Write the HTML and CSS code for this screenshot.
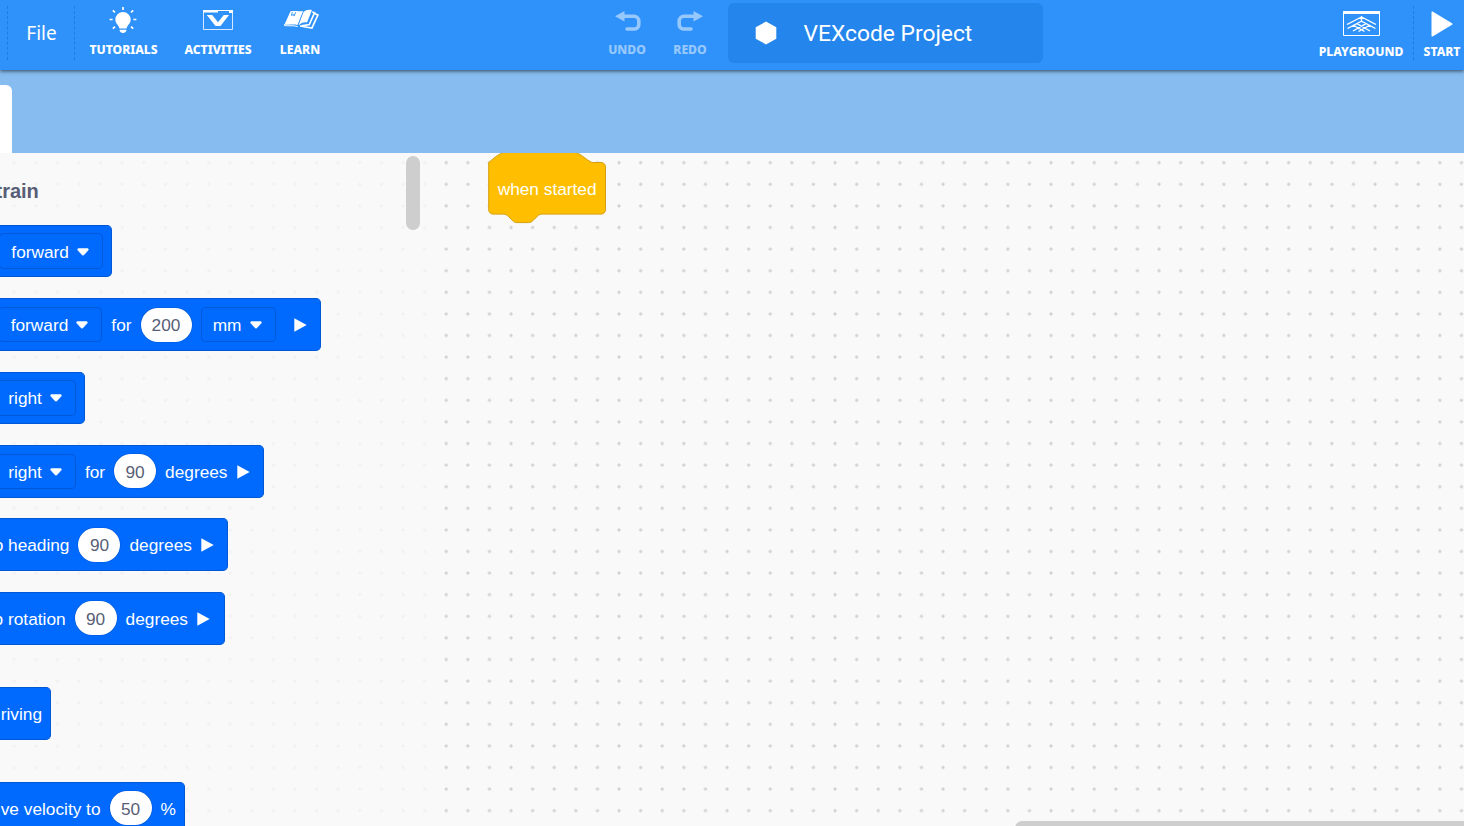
FILE: index.html
```
<!DOCTYPE html>
<html lang="en">
<head>
<meta charset="utf-8">
<title>VEXcode Project</title>
<link rel="stylesheet" href="styles.css">
</head>
<body>
<svg class="defs" width="0" height="0">
  <symbol id="caret" viewBox="0 0 12 8"><path d="M1.600 .5h8.800c1 0 1.400 1 .7 1.700L7 6.800c-.6.6-1.400.6-2 0L.9 2.200C.2 1.500.6.5 1.600.5z" fill="#fff" stroke="#fff" stroke-width=".5"/></symbol>
  <symbol id="play" viewBox="0 0 13 14"><path d="M.3 .3L12.700 7 .3 13.700z" fill="#fff"/></symbol>
</svg>
<header class="bar">
  <div class="file">File</div>
  <div class="tool tutorials">
    <svg width="28" height="27" viewBox="0 0 28 27" fill="#fff"><path d="M14 5a7.700 7.700 0 0 0-7.700 7.700c0 3 2.200 4.600 3.200 6.300.5.9.5 2.400 1.600 2.400h5.800c1.100 0 1.100-1.500 1.600-2.400 1-1.700 3.200-3.300 3.200-6.300A7.700 7.700 0 0 0 14 5z"/><path d="M10.500 22.800h7c0 2-1.500 3.200-3.500 3.200s-3.500-1.200-3.500-3.200z"/><path d="M14 0v3M.6 12.500h3M24.400 12.500h3M3.800 3.300l2.200 2M24.200 3.300l-2.200 2M3.800 21.600l2.200-2M24.200 21.600l-2.200-2" stroke="#fff" stroke-width="1.700"/></svg>
    <span>TUTORIALS</span>
  </div>
  <div class="tool activities">
    <svg width="30" height="20" viewBox="0 0 30 20" fill="none"><path d="M.5 1v18.500h29V1" stroke="#fff" stroke-opacity=".8"/><path d="M0 0h15v2.500H0zM15 0h11v1H15zM26 0h4v3h-4z" fill="#fff"/><path d="M3.800 5h5.400l5.800 7.200L20.800 5H26l-8.500 11h-5z" fill="#fff"/></svg>
    <span>ACTIVITIES</span>
  </div>
  <div class="tool learn">
    <svg width="36" height="22" viewBox="0 0 36 22" fill="none"><path d="M6.500 2.300c4-.6 8 .4 12.500-.3L13.500 16c-4-1-9 .2-13-.6z" fill="#fff"/><path d="M19.500 3C22 .8 25 .1 28 1.100L23 13.500c-3-.8-6 .5-8.500 3z" fill="#fff"/><path d="M8.200 3.200L7.500 6.500l2-1.200.6 1.800 1.600-3.900" stroke="#2f92fa" stroke-width=".9"/><path d="M28.300 3l2.200.8L25.300 15.500l-7.800 1.300M31 4.800l2.900 1.200-6 13L16 17" stroke="#fff" stroke-width="1.700"/><path d="M.6 15v1.600c4 .5 9-.4 13 .9" stroke="#fff"/></svg>
    <span>LEARN</span>
  </div>
  <div class="tool undo">
    <svg width="26" height="20" viewBox="0 0 26 20"><path d="M9 5.300h10a4.800 4.800 0 0 1 4.800 4.800v3.700a4.200 4.200 0 0 1-4.200 4.200H12" fill="none" stroke="#fff" stroke-width="3.600" stroke-linecap="round"/><path d="M0 5.200L9.500 0v10.400z" fill="#fff"/></svg>
    <span>UNDO</span>
  </div>
  <div class="tool redo">
    <svg width="26" height="20" viewBox="0 0 26 20"><path d="M17 5.300H7a4.800 4.800 0 0 0-4.800 4.800v3.700A4.200 4.200 0 0 0 6.400 18H14" fill="none" stroke="#fff" stroke-width="3.600" stroke-linecap="round"/><path d="M26 5.200L16.500 0v10.400z" fill="#fff"/></svg>
    <span>REDO</span>
  </div>
  <div class="project">
    <svg width="22" height="24" viewBox="0 0 22 24"><path d="M11 .5l10.300 5.800v11.400L11 23.500.7 17.700V6.300z" fill="#fff"/></svg>
    <span>VEXcode Project</span>
  </div>
  <div class="tool playground">
    <svg width="37" height="25" viewBox="0 0 37 25" fill="none" stroke="#fff"><path d="M.5 2v22.500h36V2"/><path d="M0 0h37v3H0z" fill="#fff" stroke="none"/><path d="M4 13.500L18.500 6 33 13.500M4.500 17.500l14-7.300 14 7.300M10 20l13-7.300M27 20L14 12.700M15.500 20.500l11.500-6.500M21.500 20.500L10 14M18.500 5v5.500" stroke-width="1.400"/></svg>
    <span>PLAYGROUND</span>
  </div>
  <div class="tool start">
    <svg width="22" height="26" viewBox="0 0 22 26"><path d="M.5 1.500C.5.300 1.300.3 2 .7L21 12.200c.8.500.8 1 0 1.500L2 25.200c-.7.400-1.500.4-1.500-.8z" fill="#fff"/></svg>
    <span>START</span>
  </div>
</header>
<div class="tabs"><div class="tab"></div></div>
<main class="workspace">
  <svg class="grid" width="1464" height="673">
    <defs><pattern id="dots" x="3.450" y="-1.100" width="21.600" height="21.600" patternUnits="userSpaceOnUse"><path d="M9 10.800h3.600M10.800 9v3.600" stroke="#c6c6c6" stroke-width="1.080"/></pattern></defs>
    <rect width="1464" height="673" fill="url(#dots)"/>
  </svg>
  <section class="palette">
    <h2>train</h2>
    <div class="block b1"><div class="drop dir">forward<svg><use href="#caret"/></svg></div></div>
    <div class="block b2"><div class="drop dir">forward<svg><use href="#caret"/></svg></div><span>for</span><b class="wide">200</b><div class="drop unit">mm<svg><use href="#caret"/></svg></div><svg class="play"><use href="#play"/></svg></div>
    <div class="block b3"><div class="drop turn">right<svg><use href="#caret"/></svg></div></div>
    <div class="block b4"><div class="drop turn">right<svg><use href="#caret"/></svg></div><span>for</span><b>90</b><span>degrees</span><svg class="play"><use href="#play"/></svg></div>
    <div class="block b5"><span>o heading</span><b>90</b><span>degrees</span><svg class="play"><use href="#play"/></svg></div>
    <div class="block b6"><span>o rotation</span><b>90</b><span>degrees</span><svg class="play"><use href="#play"/></svg></div>
    <div class="block b7"><span>riving</span></div>
    <div class="block b8"><span>ve velocity to</span><b>50</b><span>%</span></div>
  </section>
  <div class="vscroll"></div>
  <div class="hat">
    <svg width="120" height="74" viewBox="0 0 120 74"><path d="M.7 9.500C6 5.500 12-2 24-2h56c12 0 16 8 24 11.500h9.200a4.300 4.300 0 0 1 4.300 4.300v43a4.300 4.300 0 0 1-4.300 4.300H54.500c-2.500 0-4 1-5.200 2.200l-4.300 4.300c-1.200 1.200-2.500 2-4.500 2H29c-2 0-3.300-.8-4.500-2l-4.300-4.300C19 62 17.500 61.100 15 61.100H5a4.300 4.300 0 0 1-4.300-4.300z" fill="#ffbf00" stroke="#d39f0c"/></svg>
    <span>when started</span>
  </div>
  <div class="hscroll"></div>
</main>
</body>
</html>
```
FILE: styles.css
```
* { box-sizing: border-box; }
body { margin: 0; width: 1464px; height: 826px; overflow: hidden; display: flex; flex-direction: column; background: #f9f9f9; font-family: "Liberation Sans", Arial, sans-serif; }
.defs { position: absolute; }
.bar { height: 70px; flex: none; display: flex; background: #2f92fa; color: #fff; font-family: "Noto Sans", sans-serif; position: relative; z-index: 2; box-shadow: 0 1px 4px rgba(0,0,0,.65); }
.file { width: 68px; height: 54px; margin: 6px 0 0 7px; padding-left: 1px; border: dashed #1c7ce3; border-width: 0 1px; font-size: 19px; line-height: 54px; text-align: center; }
.tool { display: flex; flex-direction: column; align-items: center; font-size: 12.150px; font-weight: 800; line-height: 16px; white-space: nowrap; height: 70px; flex: none; }
.tool span { margin-top: auto; margin-bottom: 12px; }
.tutorials { width: 69px; margin-left: 14px; padding-top: 7px; }
.tutorials svg { margin-left: -1px; }
.activities { width: 68px; margin-left: 26px; padding-top: 10px; }
.activities svg { margin-left: -1px; }
.learn { width: 42px; margin-left: 27px; padding-top: 9px; }
.learn svg { margin-left: 4px; }
.undo { width: 40px; margin-left: 286px; padding-top: 11px; opacity: .5; }
.undo svg { margin-left: 2px; }
.redo { width: 36px; margin-left: 25px; padding-top: 11px; opacity: .5; }
.project { width: 315px; height: 60px; margin: 3px 0 0 20px; padding-left: 26.500px; display: flex; align-items: center; gap: 27px; background: #2485ec; border-radius: 6px; font-family: Roboto, sans-serif; font-size: 22.800px; white-space: nowrap; flex: none; }
.playground { width: 88px; margin-left: 274px; padding-top: 11px; }
.playground span { margin-bottom: 10px; }
.start { width: 51px; margin-left: 8px; height: 54px; margin-top: 6px; padding: 5px 0 0 6px; border-left: 1px dashed #1c7ce3; }
.start span { margin: 7px 0 0; }
.tabs { height: 83px; flex: none; background: #87bcf0; padding-top: 15px; }
.tab { width: 12px; height: 68px; background: #fff; border-radius: 0 6px 0 0; }
.workspace { flex: 1; position: relative; overflow: hidden; background: #f9f9f9; }
.grid { position: absolute; left: 0; top: 0; }
.palette { position: relative; width: 427px; height: 673px; background: rgba(249,249,249,.8); display: flex; flex-direction: column; align-items: flex-start; padding-top: 25px; overflow: hidden; }
h2 { margin: 0 0 19.700px -4.500px; font-size: 20px; line-height: 27px; color: #575e75; }
.block { height: 52.800px; flex: none; margin-bottom: 20.640px; background: #006aff; border: 1px solid #0058d6; border-left: 0; border-radius: 0 5px 5px 0; display: flex; align-items: center; justify-content: flex-end; gap: 9px; padding-right: 8.600px; color: #fff; font-size: 17.280px; line-height: 20px; white-space: nowrap; overflow: hidden; }
.block > span { position: relative; top: .6px; }
.b1 { width: 112px; padding-right: 8px; }
.b2 { width: 321px; padding-right: 13.500px; }
.b3 { width: 85px; padding-right: 8px; }
.b4 { width: 264px; padding-right: 13.500px; }
.b5 { width: 228.400px; padding-right: 13.500px; }
.b6 { width: 224.500px; padding-right: 13.500px; margin-bottom: 42.200px; }
.b7 { width: 51px; padding-right: 8px; margin-bottom: 42.200px; }
.b8 { width: 185.400px; padding-right: 8.500px; }
.drop { height: 35.600px; flex: none; border: 1px solid #0058d6; border-radius: 4.300px; display: flex; align-items: center; justify-content: flex-end; gap: 8.200px; padding: 1px 12.900px 0 0; }
.drop svg { width: 12px; height: 8px; }
.dir { width: 104px; }
.turn { width: 90px; }
.unit { width: 75px; }
.block b { height: 34px; width: 42px; flex: none; border-radius: 17px; background: #fff; color: #575e75; font-weight: 400; display: flex; align-items: center; justify-content: center; padding-top: 1px; box-shadow: 0 0 0 .6px #0058d6; }
.block b.wide { width: 51px; }
.play { width: 13px; height: 14px; flex: none; margin-top: 1px; }
.b2 .play { margin-left: 9px; }
.vscroll { position: absolute; left: 406px; top: 3.400px; width: 14px; height: 74px; border-radius: 7px; background: #cecece; }
.hat { position: absolute; left: 488px; top: 0; width: 120px; height: 74px; color: #fff; font-size: 17.280px; }
.hat svg { display: block; }
.hat span { position: absolute; left: 9.700px; top: 26px; line-height: 20px; white-space: nowrap; }
.hscroll { position: absolute; left: 1015px; top: 667.500px; width: 460px; height: 14px; border-radius: 7px; background: #cecece; }
```
